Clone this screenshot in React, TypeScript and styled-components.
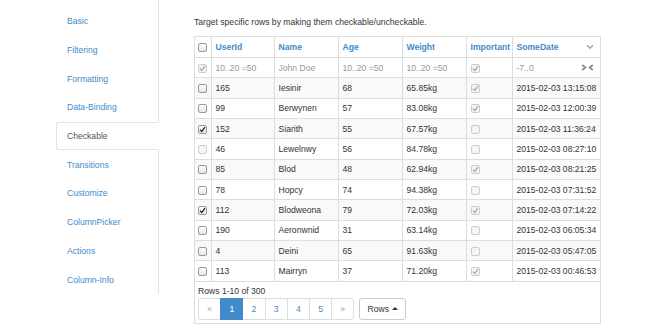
import React from "react"
import styled, { createGlobalStyle } from "styled-components"

const GlobalStyle = createGlobalStyle`
    body {
        margin: 0;
        background: #fff;
        font-family: "Liberation Sans", Arial, sans-serif;
        font-size: 8.6px;
        color: #333;
    }
`

const navItems = [
    "Basic", "Filtering", "Formatting", "Data-Binding", "Checkable",
    "Transitions", "Customize", "ColumnPicker", "Actions", "Column-Info",
]

type Row = {
    id: string
    name: string
    age: string
    weight: string
    important: boolean
    date: string
    checked: boolean
    disabled?: boolean
}

const rows: Row[] = [
    { id: "165", name: "Iesinir", age: "68", weight: "65.85kg", important: true, date: "2015-02-03 13:15:08", checked: false },
    { id: "99", name: "Berwynen", age: "57", weight: "83.08kg", important: true, date: "2015-02-03 12:00:39", checked: false },
    { id: "152", name: "Siarith", age: "55", weight: "67.57kg", important: false, date: "2015-02-03 11:36:24", checked: true },
    { id: "46", name: "Lewelnwy", age: "56", weight: "84.78kg", important: false, date: "2015-02-03 08:27:10", checked: false, disabled: true },
    { id: "85", name: "Blod", age: "48", weight: "62.94kg", important: true, date: "2015-02-03 08:21:25", checked: false },
    { id: "78", name: "Hopcy", age: "74", weight: "94.38kg", important: false, date: "2015-02-03 07:31:52", checked: false },
    { id: "112", name: "Blodweona", age: "79", weight: "72.03kg", important: true, date: "2015-02-03 07:14:22", checked: true },
    { id: "190", name: "Aeronwnid", age: "31", weight: "63.14kg", important: false, date: "2015-02-03 06:05:34", checked: false },
    { id: "4", name: "Deini", age: "65", weight: "91.63kg", important: false, date: "2015-02-03 05:47:05", checked: false },
    { id: "113", name: "Mairryn", age: "37", weight: "71.20kg", important: true, date: "2015-02-03 00:46:53", checked: false },
]

function Check({ checked, disabled }: { checked?: boolean; disabled?: boolean }) {
    return (
        <Box $disabled={disabled}>
            {checked && (
                <svg width="7" height="7" viewBox="0 0 7 7">
                    <path d="M1 3.6 L2.8 5.4 L6 1.2" fill="none" stroke={disabled ? "#aaa" : "#222"} strokeWidth="1.3" />
                </svg>
            )}
        </Box>
    )
}

function App() {
    return (
        <Page>
            <GlobalStyle />
            <Sidebar>
                {navItems.map(item => (
                    <NavItem key={item} $active={item === "Checkable"}>{item}</NavItem>
                ))}
            </Sidebar>
            <Content>
                <Intro>Target specific rows by making them checkable/uncheckable.</Intro>
                <Panel>
                    <Table>
                        <colgroup>
                            <col style={{ width: 16 }} />
                            <col style={{ width: 63 }} />
                            <col style={{ width: 64 }} />
                            <col style={{ width: 64 }} />
                            <col style={{ width: 64 }} />
                            <col style={{ width: 46 }} />
                            <col />
                        </colgroup>
                        <thead>
                            <tr>
                                <Th><Check /></Th>
                                <Th>UserId</Th>
                                <Th>Name</Th>
                                <Th>Age</Th>
                                <Th>Weight</Th>
                                <Th>Important</Th>
                                <Th>
                                    <DateHead>
                                        SomeDate
                                        <svg width="8" height="6" viewBox="0 0 8 6">
                                            <path d="M1 1.2 L4 4.2 L7 1.2" fill="none" stroke="#aaa" strokeWidth="1.6" />
                                        </svg>
                                    </DateHead>
                                </Th>
                            </tr>
                        </thead>
                        <tbody>
                            <FilterRow>
                                <Td><Check checked disabled /></Td>
                                <Td>10..20 =50</Td>
                                <Td>John Doe</Td>
                                <Td>10..20 =50</Td>
                                <Td>10..20 =50</Td>
                                <Td><Check checked disabled /></Td>
                                <Td>
                                    <DateHead>
                                        -7..0
                                        <Arrows>
                                            <svg width="6" height="7" viewBox="0 0 6 7">
                                                <path d="M1.2 1 L4.4 3.5 L1.2 6" fill="none" stroke="#888" strokeWidth="1.6" />
                                            </svg>
                                            <svg width="6" height="7" viewBox="0 0 6 7">
                                                <path d="M4.8 1 L1.6 3.5 L4.8 6" fill="none" stroke="#888" strokeWidth="1.6" />
                                            </svg>
                                        </Arrows>
                                    </DateHead>
                                </Td>
                            </FilterRow>
                            {rows.map((r, i) => (
                                <DataRow key={r.id} $odd={i % 2 === 0}>
                                    <Td><Check checked={r.checked} disabled={r.disabled} /></Td>
                                    <Td>{r.id}</Td>
                                    <Td>{r.name}</Td>
                                    <Td>{r.age}</Td>
                                    <Td>{r.weight}</Td>
                                    <Td><Check checked={r.important} disabled /></Td>
                                    <Td>{r.date}</Td>
                                </DataRow>
                            ))}
                        </tbody>
                    </Table>
                    <Footer>
                        <Summary>Rows 1-10 of 300</Summary>
                        <Controls>
                            <Pager>
                                <PageLink $muted>«</PageLink>
                                <PageLink $active>1</PageLink>
                                <PageLink>2</PageLink>
                                <PageLink>3</PageLink>
                                <PageLink>4</PageLink>
                                <PageLink>5</PageLink>
                                <PageLink $muted>»</PageLink>
                            </Pager>
                            <RowsButton>
                                Rows
                                <Caret />
                            </RowsButton>
                        </Controls>
                    </Footer>
                </Panel>
            </Content>
        </Page>
    )
}

// layout

const Page = styled.div`
    display: flex;
    align-items: flex-start;
    width: 660px;
    height: 330px;
    overflow: hidden;
`

const Sidebar = styled.nav`
    display: flex;
    flex-direction: column;
    box-sizing: border-box;
    width: 103px;
    margin-left: 56px;
    padding-top: 7px;
    border-right: 1px solid #e3e3e3;
    flex-shrink: 0;
`

const NavItem = styled.div<{ $active?: boolean }>`
    box-sizing: border-box;
    height: 28.7px;
    display: flex;
    align-items: center;
    padding-left: 10px;
    margin-right: -1px;
    border: 1px solid transparent;
    border-right: none;
    border-radius: 3px 0 0 3px;
    color: #428bca;
    ${p => p.$active && `
        background: #fff;
        color: #555;
        border-color: #e3e3e3;
    `}
`

const Content = styled.div`
    margin-left: 35px;
    padding-top: 16px;
    display: flex;
    flex-direction: column;
`

const Intro = styled.div`
    height: 12px;
    line-height: 12px;
    margin-bottom: 8px;
    color: #333;
`

// table

const Panel = styled.div`
    box-sizing: border-box;
    width: 407px;
    border: 1px solid #ddd;
`

const Table = styled.table`
    width: 100%;
    border-collapse: collapse;
    border-style: hidden;
    table-layout: fixed;
`

const Th = styled.th`
    height: 20px;
    padding: 0 4px;
    border: 1px solid #ddd;
    text-align: left;
    font-weight: bold;
    color: #428bca;
    white-space: nowrap;
    &:first-child {
        padding: 0 0 0 3px;
    }
`

const Td = styled.td`
    height: 19.33px;
    padding: 0 4px;
    border: 1px solid #ddd;
    white-space: nowrap;
    overflow: hidden;
    &:first-child {
        padding: 0 0 0 3px;
    }
`

const FilterRow = styled.tr`
    background: #fff;
    color: #999;
`

const DataRow = styled.tr<{ $odd?: boolean }>`
    background: ${p => (p.$odd ? "#f9f9f9" : "#fff")};
    color: #333;
`

const DateHead = styled.div`
    display: flex;
    align-items: center;
    justify-content: space-between;
    padding-right: 2px;
`

const Arrows = styled.span`
    display: flex;
    gap: 1px;
`

const Box = styled.span<{ $disabled?: boolean }>`
    display: inline-flex;
    align-items: center;
    justify-content: center;
    box-sizing: border-box;
    width: 9px;
    height: 9px;
    vertical-align: middle;
    border: 1px solid ${p => (p.$disabled ? "#ccc" : "#999")};
    border-radius: 2px;
    background: ${p => (p.$disabled ? "#f4f4f4" : "linear-gradient(#fdfdfd, #e6e6e6)")};
`

// footer

const Footer = styled.div`
    border-top: 1px solid #ddd;
    padding: 3px 3px 3px 3px;
`

const Summary = styled.div`
    height: 12px;
    line-height: 12px;
    color: #333;
`

const Controls = styled.div`
    display: flex;
    gap: 5px;
    margin-top: 1px;
`

const Pager = styled.div`
    display: flex;
`

const PageLink = styled.span<{ $active?: boolean; $muted?: boolean }>`
    box-sizing: border-box;
    width: 23.2px;
    height: 22px;
    display: flex;
    align-items: center;
    justify-content: center;
    border: 1px solid #ddd;
    margin-left: -1px;
    color: ${p => (p.$muted ? "#999" : "#428bca")};
    background: #fff;
    &:first-child {
        margin-left: 0;
        border-radius: 3px 0 0 3px;
    }
    &:last-child {
        border-radius: 0 3px 3px 0;
    }
    ${p => p.$active && `
        background: #428bca;
        border-color: #428bca;
        color: #fff;
        position: relative;
    `}
`

const RowsButton = styled.span`
    box-sizing: border-box;
    width: 47px;
    height: 22px;
    display: flex;
    align-items: center;
    justify-content: center;
    gap: 3px;
    border: 1px solid #ccc;
    border-radius: 3px;
    color: #333;
    background: #fff;
`

const Caret = styled.span`
    width: 0;
    height: 0;
    border-left: 3px solid transparent;
    border-right: 3px solid transparent;
    border-bottom: 3px solid #333;
`

export default App
